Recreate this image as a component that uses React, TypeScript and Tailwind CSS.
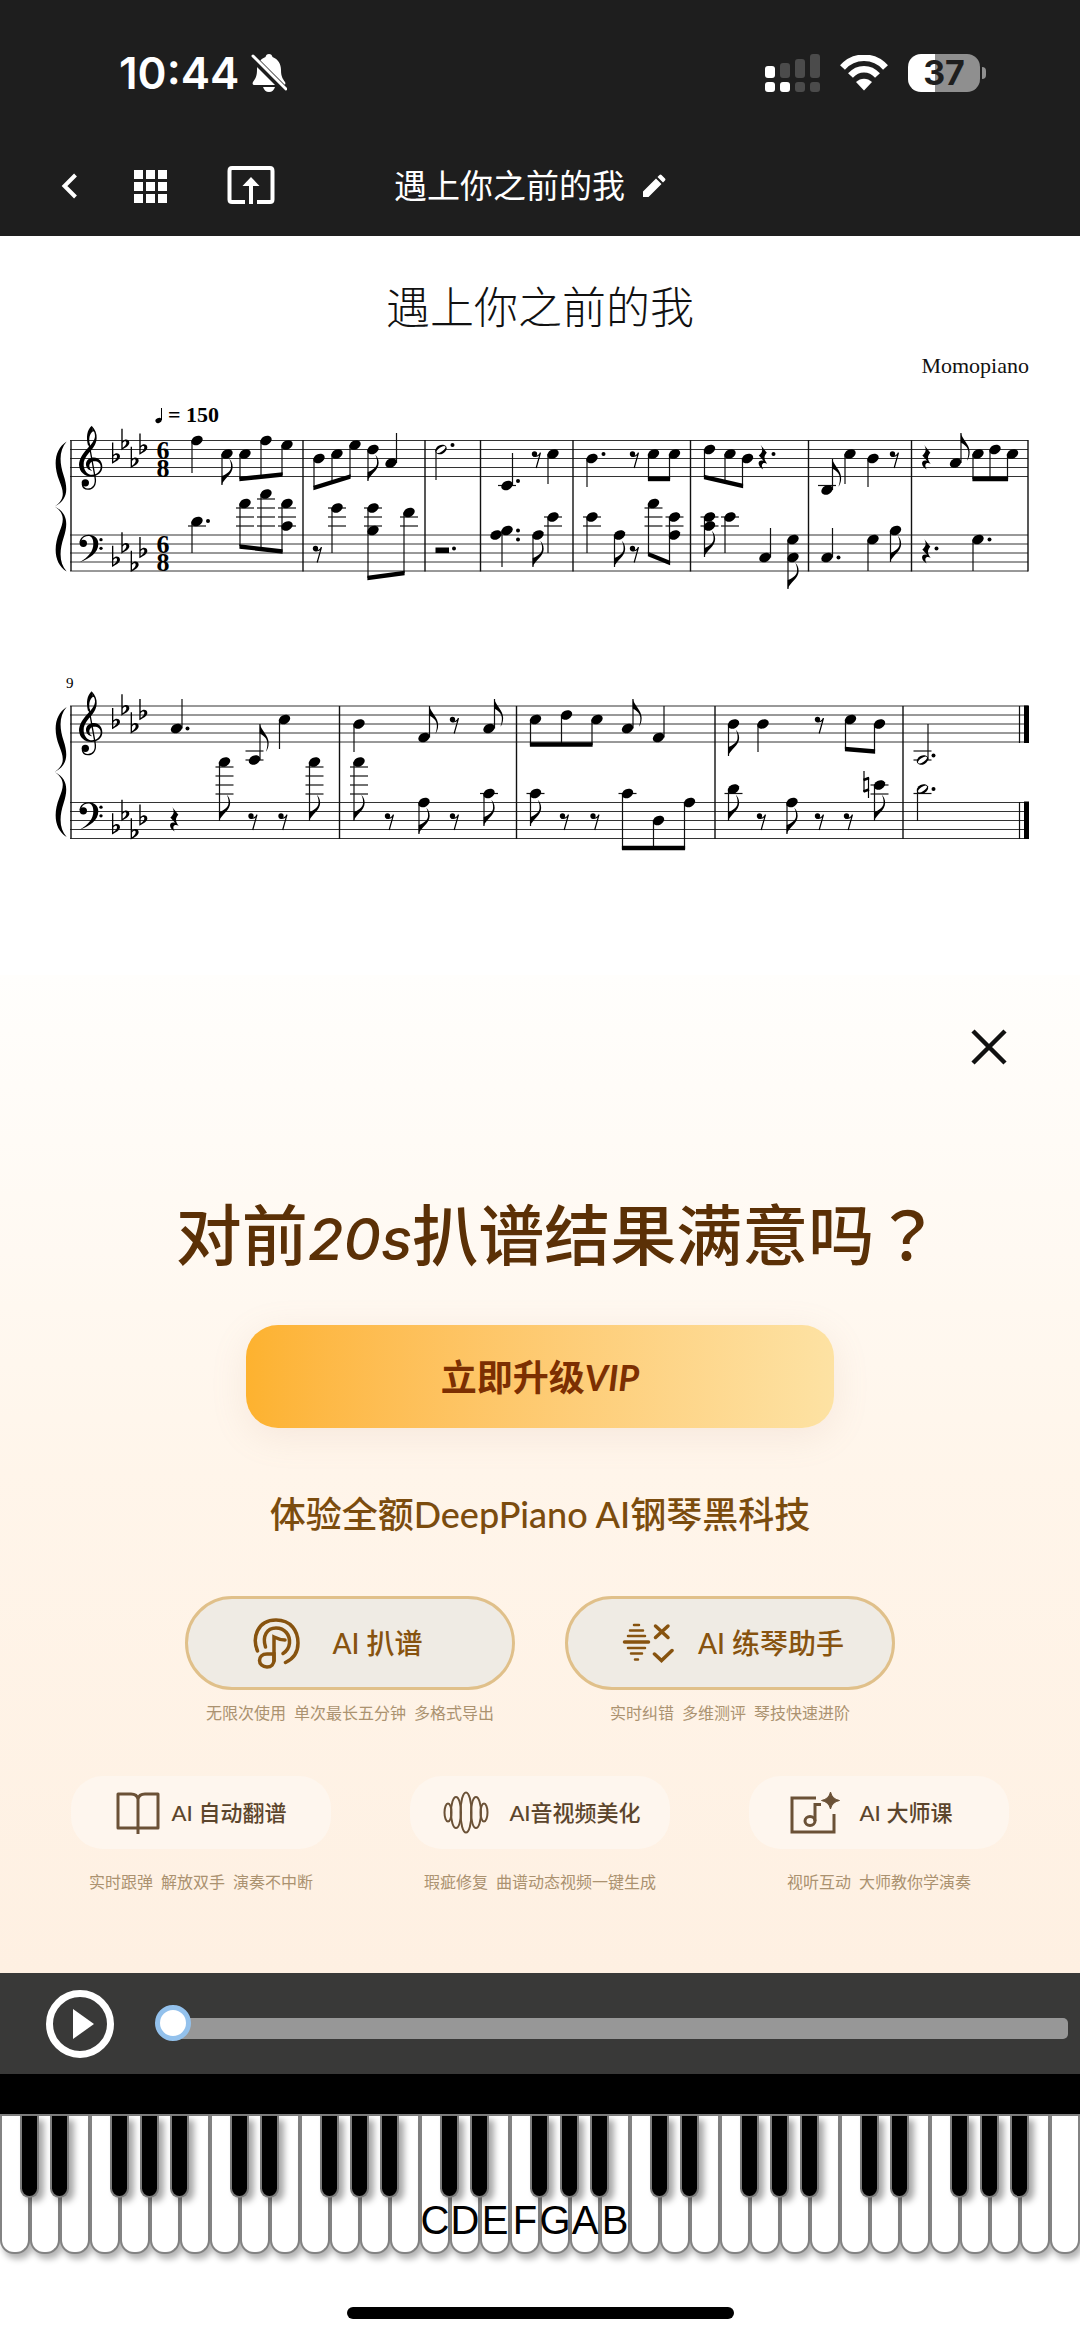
import React from "react";

type Chord = {
  x: number;
  ys: number[];
  end: number;
  flag?: boolean;
  half?: boolean;
  led?: number[];
};

const n = (x: number, ys: number[], end: number, extra: Partial<Chord> = {}): Chord => ({ x, ys, end, ...extra });

const F = { flag: true };
const L1 = { led: [508, 517, 526] };
const L2 = { led: [517, 526] };
const L4 = [767, 776, 785, 794];

const CHORDS: Chord[] = [
  // first system, upper staff
  n(197, [440.5], 473),
  n(227, [454], 485, F),
  n(245, [454], 479),
  n(266, [440.5], 477),
  n(287, [445], 475),
  n(319, [458.5], 487),
  n(337, [454], 482),
  n(355, [445], 477),
  n(373, [449.5], 481, F),
  n(391, [463], 433),
  n(441, [449.5], 480, { half: true }),
  n(507, [485.5], 453, { led: [485.5] }),
  n(553, [454], 484),
  n(592, [458.5], 487),
  n(653.5, [454], 479),
  n(674.5, [454], 479),
  n(709.5, [449.5], 477),
  n(730, [454], 482),
  n(747.5, [458.5], 486),
  n(827, [490], 459, { flag: true, led: [485.5] }),
  n(850, [454], 484),
  n(873, [458.5], 487),
  n(955.5, [463], 433, F),
  n(978, [454], 479),
  n(995, [449.5], 479),
  n(1012.5, [454], 479),
  // first system, lower staff
  n(197, [521.5], 553, { led: [526] }),
  n(245, [503.5], 546, L1),
  n(266, [494], 549, { led: [499, 508, 517, 526] }),
  n(287, [503.5, 526], 552, L1),
  n(337, [508], 553, L1),
  n(373, [508, 530.5], 578, L1),
  n(409, [512.5], 573, L2),
  n(507, [530.5], 567),
  n(538, [535], 567, F),
  n(553, [517], 553, L2),
  n(592, [517], 553, L2),
  n(619.5, [535], 567, F),
  n(653.5, [503.5], 554, L1),
  n(674.5, [517, 535], 563, L2),
  n(709.5, [517, 526], 557, { flag: true, led: [517, 526] }),
  n(730, [517], 553, L2),
  n(765, [557.5], 528),
  n(793, [539.5, 557.5], 589, F),
  n(827, [557.5], 528),
  n(873, [539.5], 571),
  n(895.5, [530.5], 562, F),
  n(978, [539.5], 571),
  // second system, upper staff
  n(176.5, [728.5], 699),
  n(254.5, [760], 724, { flag: true, led: [751, 760] }),
  n(284.5, [719.5], 749),
  n(359, [724], 752),
  n(424, [737.5], 706, F),
  n(489, [728.5], 699, F),
  n(535.5, [719.5], 745),
  n(566.5, [715], 745),
  n(597, [719.5], 745),
  n(627.5, [728.5], 699, F),
  n(658.5, [737.5], 706),
  n(733.5, [724], 756, F),
  n(763, [724], 752),
  n(850.5, [719.5], 749),
  n(879.5, [724], 751),
  n(922.5, [760], 724, { half: true, led: [751, 760] }),
  // second system, lower staff
  n(224.5, [762], 821, { flag: true, led: L4 }),
  n(314.5, [762], 821, { flag: true, led: L4 }),
  n(359, [762], 821, { flag: true, led: L4 }),
  n(424, [802.5], 834, F),
  n(489, [793.5], 826, { flag: true, led: [793.5] }),
  n(535.5, [793.5], 826, { flag: true, led: [793.5] }),
  n(627.5, [793.5], 849, { led: [793.5] }),
  n(658.5, [820.5], 849),
  n(689.5, [802.5], 849),
  n(733.5, [789], 821, { flag: true, led: [793.5] }),
  n(792, [802.5], 834, F),
  n(879.5, [785], 821, { flag: true, led: [785, 794] }),
  n(922.5, [789], 821, { half: true, led: [793.5] }),
];

const BEAMS: [number, number, number, number][] = [
  [240, 479, 282, 474.5],
  [314, 488, 350, 476.5],
  [648.5, 479, 669.5, 479],
  [704.5, 477, 742.5, 486],
  [973, 479, 1007.5, 479],
  [240, 546.5, 282, 551.5],
  [368, 578, 404, 573],
  [648.5, 554, 669.5, 563],
  [530.5, 744.5, 592, 744.5],
  [845.5, 749, 874.5, 751.5],
  [622.5, 848, 684.5, 848],
];

const EIGHTH_RESTS: [number, number][] = [
  [534.5, 454], [632.5, 454], [892.5, 454],
  [315.5, 548.5], [632.5, 548.5],
  [452.5, 719.5], [817.5, 719.5],
  [251, 816], [281, 816], [387.5, 816], [452.5, 816], [562.5, 816],
  [593, 816], [759.5, 816], [817.5, 816], [846.5, 816],
];

const QUARTER_RESTS: [number, number][] = [
  [762.5, 457.5], [926, 457.5], [926, 551.5], [174, 819.5],
];

const DOTS: [number, number][] = [
  [208, 521], [452.5, 445], [518, 481], [603.5, 454], [773.5, 454],
  [454, 548.5], [518, 530.5], [518, 539.5], [838.5, 557.5], [936.5, 548.5],
  [989.5, 539.5], [187.5, 728.5], [933.5, 755.5], [933.5, 789],
];

function Head({ x, y, half }: { x: number; y: number; half?: boolean }) {
  return (
    <g transform={`translate(${x} ${y}) rotate(-27)`}>
      <ellipse rx="6" ry="4.4" />
      {half && <ellipse rx="5.2" ry="2" fill="#fff" transform="rotate(-8)" />}
    </g>
  );
}

function ChordMark({ x, ys, end, flag, half, led = [] }: Chord) {
  const down = end > ys[0];
  const sx = down ? x - 5 : x + 5.5;
  return (
    <g>
      {led.map((y) => (
        <path key={y} d={`M${x - 9} ${y}h18`} stroke="#111" strokeWidth="1.2" />
      ))}
      <path d={`M${sx} ${ys[0]}V${end}`} stroke="#111" strokeWidth="1.2" />
      {ys.map((y) => (
        <Head key={y} x={x} y={y} half={half} />
      ))}
      {flag && (
        <path
          transform={`translate(${sx} ${end}) scale(${down ? 0.333 : 0.27} ${down ? 0.333 : -0.35})`}
          d="M-1 0C6-20 32-32 32-54C32-66 27-74 22-79C27-68 28-60 27-52C25-40 12-32-1-27Z"
        />
      )}
    </g>
  );
}

function Flats({ top, tops }: { top: number; tops: number[] }) {
  return (
    <g transform={`translate(40 ${top}) scale(0.3333)`} fillRule="evenodd">
      {tops.map((t, i) => (
        <path
          key={i}
          transform={`translate(${[218, 246, 274, 300][i]} ${t})`}
          d="M-2 0H2V37C9 29 22 31 22 42C22 51 10 57-2 64ZM2 43V57C9 52 13 47 13 42C13 36 6 36 2 43Z"
        />
      ))}
    </g>
  );
}

function SystemFrame({ treble, bass, time }: { treble: number; bass: number; time?: boolean }) {
  const lines = [0, 9, 18, 27, 36];
  return (
    <g>
      {[...lines.map((l) => treble + l), ...lines.map((l) => bass + l)].map((y) => (
        <path key={y} d={`M70 ${y}H1028`} stroke="#333" strokeWidth="1" />
      ))}
      <path d={`M71 ${treble}V${bass + 36}`} stroke="#111" strokeWidth="1.4" />
      <g transform={`translate(40 ${treble + 1}) scale(0.3333)`}>
        <path d="M80 0C45 22 38 68 58 118C70 148 78 172 44 195C78 218 70 242 58 272C38 322 45 368 80 390C58 365 57 330 71 288C84 248 84 215 44 195C84 175 84 142 71 102C57 60 58 25 80 0Z" />
      </g>
      <g transform={`translate(40 ${treble}) scale(0.3333) translate(0 -181)`}>
        <path d="M155 137C166 148 171 162 170 174C169 194 157 206 147 218C136 231 130 242 131 256C133 274 144 284 156 284C170 284 182 274 182 260C182 249 174 243 163 243C153 243 148 250 148 257C148 264 151 268 157 272C145 270 138 262 138 252C138 240 149 232 162 232C177 232 187 245 187 260C187 277 173 289 154 289C134 289 118 276 117 254C117 236 130 218 143 204C156 190 164 180 165 168C165 158 162 152 158 153Z" />
        <path d="M155 137C141 150 138 170 144 196L150 194C145 175 149 160 159 153Z" />
        <path d="M147 190L165 290C170 315 158 327 144 327C134 327 128 321 127 312" fill="none" stroke="#000" strokeWidth="4" />
        <circle cx="136" cy="308" r="11" />
      </g>
      <g transform={`translate(40 ${bass}) scale(0.3333) translate(0 -465)`}>
        <path d="M118 489C120 473 131 464 146 464C163 464 175 475 175 491C175 518 150 535 119 547C146 530 160 514 160 491C160 476 154 468 145 468C136 468 128 472 125 480Z" />
        <circle cx="130" cy="490" r="11" />
        <circle cx="183" cy="479" r="5" />
        <circle cx="183" cy="505" r="5" />
      </g>
      <Flats top={treble} tops={[6, -35, 19, -21]} />
      <Flats top={bass} tops={[32, -8, 47, 6]} />
      {time &&
        [treble, bass].map((t) => (
          <g key={t} fontFamily="Liberation Serif, serif" fontWeight="700" fontSize="26" textAnchor="middle">
            <text x="163" y={t + 18}>6</text>
            <text x="163" y={t + 36}>8</text>
          </g>
        ))}
    </g>
  );
}

function Score() {
  return (
    <svg viewBox="0 380 1080 595" className="block h-auto w-full" role="img" aria-label="乐谱">
      <SystemFrame treble={440.5} bass={535} time />
      <SystemFrame treble={706} bass={802.5} />
      {[303, 425, 480.5, 573, 690.5, 808.5, 911.5, 1028].map((x) => (
        <path key={x} d={`M${x} 440V571.5`} stroke="#111" strokeWidth="1.4" />
      ))}
      {[339.5, 516.5, 715, 903].map((x) => (
        <path key={x} d={`M${x} 706V839`} stroke="#111" strokeWidth="1.4" />
      ))}
      {[706, 802].map((y) => (
        <g key={y}>
          <path d={`M1019.5 ${y}v37`} stroke="#111" strokeWidth="1.2" />
          <rect x="1024" y={y - 0.5} width="5" height="37.5" />
        </g>
      ))}
      {CHORDS.map((c, i) => (
        <ChordMark key={i} {...c} />
      ))}
      <Head x={496} y={535} />
      {BEAMS.map(([a, b, c, d], i) => (
        <path key={i} d={`M${a - 0.6} ${b - 2.2}L${c + 0.6} ${d - 2.2}V${d + 2.2}L${a - 0.6} ${b + 2.2}Z`} />
      ))}
      {DOTS.map(([x, y], i) => (
        <circle key={i} cx={x} cy={y} r="2" />
      ))}
      {EIGHTH_RESTS.map(([x, y], i) => (
        <g key={i} transform={`translate(${x} ${y}) scale(0.3333)`}>
          <circle r="8" />
          <path d="M-4 6C4 9 14 6 18-4L5 42" fill="none" stroke="#000" strokeWidth="3.6" />
        </g>
      ))}
      {QUARTER_RESTS.map(([x, y], i) => (
        <path
          key={i}
          transform={`translate(${x} ${y}) scale(0.3333)`}
          d="M-6-38L13-14C3-3 4 6 14 19C1 13-7 20 2 36C-17 25-16 5 3 10L-11-6C2-16 1-27-6-38Z"
        />
      ))}
      <rect x="435.5" y="547.5" width="13.5" height="5.5" />
      <g fill="none" stroke="#000">
        <path d="M864 771V792M868.5 777V798" strokeWidth="1.2" />
        <path d="M863.5 780L869 778M863.5 791.5L869 789.5" strokeWidth="2.8" />
      </g>
      <ellipse cx="158.5" cy="420.5" rx="3.2" ry="2.4" transform="rotate(-25 158.5 420.5)" />
      <path d="M161.5 420V408" stroke="#000" strokeWidth="1" />
      <text x="168" y="422" fontFamily="Liberation Serif, serif" fontWeight="700" fontSize="22">= 150</text>
      <text x="66" y="688" fontFamily="Liberation Serif, serif" fontSize="15">9</text>
    </svg>
  );
}

function StatusBar() {
  return (
    <div className="flex items-center justify-between pt-[49px] pr-[94px] pl-[119px] text-white">
      <div className="flex h-12 items-center gap-3">
        <span className="font-['Inter',sans-serif] text-[44px] leading-12 font-semibold">10:44</span>
        <svg width="36" height="40" viewBox="0 0 36 40" fill="#fff" aria-label="静音">
          <path d="M18 1C20 1 21 2 21.500 4C27 6 30 11 30 17C30 24 32 26 34 29C35 31 34 32 32 32H4C2 32 1 31 2 29C4 26 6 24 6 17C6 11 9 6 14.500 4C15 2 16 1 18 1Z" />
          <path d="M12 34H24C23 37 21 39 18 39C15 39 13 37 12 34Z" />
          <path d="M0 3L34 37" stroke="#1e1e1e" strokeWidth="7" />
          <path d="M2 3L35 36" stroke="#fff" strokeWidth="3" strokeLinecap="round" />
        </svg>
      </div>
      <div className="flex items-center gap-5">
        <svg width="55" height="40" viewBox="0 0 55 40" aria-label="信号">
          <g fill="#fff">
            <rect x="0" y="13" width="10" height="12" rx="3" />
            <rect x="0" y="29" width="10" height="10" rx="3" />
            <rect x="15" y="29" width="10" height="10" rx="3" />
          </g>
          <g fill="#4b4b4b">
            <rect x="15" y="10" width="10" height="15" rx="3" />
            <rect x="30" y="6" width="10" height="19" rx="3" />
            <rect x="45" y="1" width="10" height="24" rx="3" />
            <rect x="30" y="29" width="10" height="10" rx="3" />
            <rect x="45" y="29" width="10" height="10" rx="3" />
          </g>
        </svg>
        <svg width="48" height="36" viewBox="0 0 48 36" aria-label="无线网络">
          <g fill="none" stroke="#fff" strokeWidth="6.500">
            <path d="M2.500 12.500C14-.5 34-.5 45.500 12.500" />
            <path d="M10.500 20.500C18 12 30 12 37.500 20.500" />
          </g>
          <path d="M24 35.500L16 27C20.500 22.500 27.500 22.500 32 27Z" fill="#fff" />
        </svg>
        <div className="flex items-center gap-0.5">
          <div className="flex h-[38px] w-[72px] items-center justify-center rounded-[13px] bg-[linear-gradient(90deg,#fff_37%,#8f8f8f_37%)] font-['Inter',sans-serif] text-[34px] leading-none font-bold text-[#1e1e1e]">
            37
          </div>
          <div className="h-3 w-1 rounded-r-full bg-[#8f8f8f]" />
        </div>
      </div>
    </div>
  );
}

function NavBar() {
  return (
    <nav className="mt-[65px] flex h-12 items-center pl-[60px] text-white">
      <button aria-label="返回" className="flex">
        <svg width="18" height="26" viewBox="0 0 18 26" fill="none" stroke="#fff" strokeWidth="4">
          <path d="M15.500 2L4.500 13L15.500 24" />
        </svg>
      </button>
      <button aria-label="菜单" className="ml-14 grid grid-cols-3 gap-[3px]">
        {Array.from({ length: 9 }, (_, i) => (
          <span key={i} className="size-[9px] bg-white" />
        ))}
      </button>
      <button aria-label="导出" className="ml-[60px] flex">
        <svg width="48" height="40" viewBox="0 0 48 40" fill="none" stroke="#fff" strokeWidth="4">
          <path d="M18 36H5Q2.500 36 2.500 33.500V5Q2.500 2 5 2H43Q45.500 2 45.500 5V33.500Q45.500 36 43 36H30" />
          <path d="M24 38V18" />
          <path d="M15.500 20L24 11L32.500 20Z" fill="#fff" stroke="none" />
        </svg>
      </button>
      <h1 className="ml-[119px] pb-1 font-['Noto_Sans_CJK_SC',sans-serif] text-[33px] leading-12 font-normal">遇上你之前的我</h1>
      <button aria-label="编辑标题" className="ml-[17px] flex">
        <svg width="24" height="24" viewBox="0 0 24 24" fill="#fff">
          <path d="M1 23V17.500L14 4.500L19.500 10L6.500 23ZM15.500 3L17.500 1Q18.500 0 19.500 1L23 4.500Q24 5.500 23 6.500L21 8.500Z" />
        </svg>
      </button>
    </nav>
  );
}

function Caption({ parts }: { parts: string[] }) {
  return (
    <p className="flex justify-center gap-2 text-base leading-6 whitespace-nowrap text-[#ab9270]">
      {parts.map((p) => (
        <span key={p}>{p}</span>
      ))}
    </p>
  );
}

const TranscribeIcon = (
  <svg width="47" height="51" viewBox="0 0 47 51" fill="none" stroke="#87530f" strokeWidth="3.500" strokeLinecap="round">
    <path d="M4.500 33C-1 20 4 2 23 2C38 2 45 13 45 25C45 34 40 41 32.500 44.500" />
    <path d="M12.500 29C9 18 14 10 23 10C32 10 37 17 36.500 25C36 30 34 33 30 35.500" />
    <path d="M21 43V19C25 21 28 22 32 22" />
    <path d="M21 36H14C9 36 6.500 39 6.500 42.500C6.500 46 9.500 49 14 49C18.500 49 21 46 21 42Z" />
  </svg>
);

const PracticeIcon = (
  <svg width="52" height="40" viewBox="0 0 52 40" fill="none" stroke="#87530f" strokeLinecap="round">
    <path d="M12 2H17M8 7.500H21M6 13H23M6 25H23M9 30.500H20M13 36.500H16" strokeWidth="2.500" />
    <path d="M2.500 19H26.500" strokeWidth="3.500" />
    <path d="M33.500 3L46 14.500M46 3L33.500 14.500" strokeWidth="3.500" />
    <path d="M32.500 31L39.500 37.500L50 27.500" strokeWidth="3.500" />
  </svg>
);

const BookIcon = (
  <svg width="44" height="42" viewBox="0 0 44 42" fill="none" stroke="#6b5136" strokeWidth="3">
    <path d="M2 2H15Q21 2 22 7Q23 2 29 2H42V36H2ZM22 6V42" strokeLinejoin="round" />
  </svg>
);

const WaveIcon = (
  <svg width="46" height="43" viewBox="0 0 46 43" fill="none" stroke="#6b5136" strokeWidth="2">
    <ellipse cx="23" cy="21.500" rx="5.500" ry="20" />
    <ellipse cx="13" cy="21.500" rx="5" ry="15.500" />
    <ellipse cx="33" cy="21.500" rx="5" ry="15.500" />
    <ellipse cx="5" cy="21.500" rx="3.500" ry="9" />
    <ellipse cx="41" cy="21.500" rx="3.500" ry="9" />
  </svg>
);

const MasterIcon = (
  <svg width="50" height="42" viewBox="0 0 50 42" fill="none" stroke="#6b5136" strokeWidth="3">
    <path d="M26 6H2V40H44V22" />
    <ellipse cx="20" cy="29" rx="5" ry="4.500" />
    <path d="M25 29V12.500H31" />
    <path d="M40.500 0Q42 7 49.500 8.500Q42 10 40.500 17Q39 10 31.500 8.500Q39 7 40.500 0Z" fill="#6b5136" stroke="#6b5136" strokeWidth="1" />
  </svg>
);

const CARDS = [
  { icon: TranscribeIcon, label: "AI 扒谱", parts: ["无限次使用", "单次最长五分钟", "多格式导出"], box: "gap-8 pr-6" },
  { icon: PracticeIcon, label: "AI 练琴助手", parts: ["实时纠错", "多维测评", "琴技快速进阶"], box: "gap-6 pl-1.5" },
];

const PILLS = [
  { icon: BookIcon, label: "AI 自动翻谱", parts: ["实时跟弹", "解放双手", "演奏不中断"], box: "gap-3" },
  { icon: WaveIcon, label: "AI音视频美化", parts: ["瑕疵修复", "曲谱动态视频一键生成"], box: "gap-5 pl-1" },
  { icon: MasterIcon, label: "AI 大师课", parts: ["视听互动", "大师教你学演奏"], box: "gap-5 pr-4" },
];

function Upsell() {
  return (
    <section className="bg-linear-to-b from-[#fffefc] via-[#fff5ea] to-[#fef0e2] pt-[50px] pb-[79px] font-['Lato','Noto_Sans_CJK_SC',sans-serif]">
      <div className="flex justify-end pr-[69px]">
        <button aria-label="关闭" className="flex size-11 items-center justify-center">
          <svg width="36" height="36" viewBox="0 0 36 36" stroke="#111" strokeWidth="4.500">
            <path d="M2 2L34 34M34 2L2 34" />
          </svg>
        </button>
      </div>
      <h2 className="mt-[126px] pl-9 text-center text-[66px] leading-20 font-medium whitespace-nowrap text-[#5b3006]">
        对前<span className="font-['Inter',sans-serif] text-[58px] leading-none italic">20s</span>扒谱结果满意吗
        <span className="font-['Noto_Sans_CJK_TC',sans-serif] leading-none" lang="zh-Hant">？</span>
      </h2>
      <button className="mx-auto mt-[50px] flex h-[103px] w-[588px] max-w-full items-center justify-center rounded-4xl bg-linear-to-r from-[#fdb22f] to-[#fde2a3] text-4xl font-bold text-[#7c2f02] shadow-[0_8px_36px_rgba(190,150,130,0.14)]">
        立即升级<i>VIP</i>
      </button>
      <p className="mt-[62px] text-center text-4xl leading-12 font-medium text-[#7b4c0e]">体验全额DeepPiano AI钢琴黑科技</p>
      <div className="mt-[58px] flex justify-center gap-[50px]">
        {CARDS.map((c) => (
          <div key={c.label} className="w-[330px]">
            <button
              className={`mb-[11px] flex h-[94px] w-full items-center justify-center rounded-full border-3 border-[#e0c08a] bg-[#efebe4] text-[28px] font-medium text-[#87530f] ${c.box}`}
            >
              {c.icon}
              {c.label}
            </button>
            <Caption parts={c.parts} />
          </div>
        ))}
      </div>
      <div className="mt-[51px] flex justify-between px-[71px]">
        {PILLS.map((p) => (
          <div key={p.label} className="w-[260px]">
            <button
              className={`mb-[21px] flex h-[73px] w-full items-center justify-center rounded-4xl bg-[#fef6ee] text-[22px] font-medium text-[#5c452c] ${p.box}`}
            >
              {p.icon}
              {p.label}
            </button>
            <Caption parts={p.parts} />
          </div>
        ))}
      </div>
    </section>
  );
}

function Player() {
  return (
    <div className="flex h-[101px] items-center bg-[#393938] pr-3 pl-[46px]">
      <button aria-label="播放" className="flex">
        <svg width="68" height="68" viewBox="0 0 68 68">
          <circle cx="34" cy="34" r="30.500" fill="none" stroke="#fff" strokeWidth="7" />
          <path d="M27 19L48 34L27 49Z" fill="#fff" />
        </svg>
      </button>
      <input
        type="range"
        aria-label="播放进度"
        min={0}
        max={100}
        defaultValue={0}
        className="mt-[9px] ml-[41px] h-[21px] flex-1 appearance-none rounded-[5px] bg-[linear-gradient(90deg,transparent_16px,#979797_16px)] [&::-webkit-slider-thumb]:-mt-[11px] [&::-webkit-slider-thumb]:size-9 [&::-webkit-slider-thumb]:appearance-none [&::-webkit-slider-thumb]:rounded-full [&::-webkit-slider-thumb]:border-5 [&::-webkit-slider-thumb]:border-[#93c1ec] [&::-webkit-slider-thumb]:bg-white"
      />
    </div>
  );
}

const SHARP_AFTER = [true, true, false, true, true, true, false];
const NAMES = ["C", "D", "E", "F", "G", "A", "B"];

function Piano() {
  return (
    <div className="bg-white">
      <div className="h-10 bg-black" />
      <div className="flex h-[140px] border-t-2 border-[#808080]">
        {Array.from({ length: 36 }, (_, i) => (
          <div key={i} className="relative flex-1">
            <button
              aria-label={`白键 ${i + 1}`}
              className="block h-full w-full rounded-b-[14px] border-2 border-t-0 border-[#838383] bg-white shadow-[3px_5px_6px_rgba(0,0,0,0.3)]"
            />
            {i < 35 && SHARP_AFTER[i % 7] && (
              <button
                aria-label={`黑键 ${i + 1}`}
                className="absolute top-0 -right-[9px] z-10 h-[82px] w-[19px] rounded-b-[10px] border-2 border-t-0 border-[#7d7d7d] bg-black shadow-[5px_4px_6px_rgba(0,0,0,0.35)]"
              />
            )}
            {i >= 14 && i < 21 && (
              <span className="pointer-events-none absolute inset-x-0 top-[82px] z-20 flex justify-center font-['Liberation_Sans',sans-serif] text-[40px] leading-11 text-black">
                {NAMES[i - 14]}
              </span>
            )}
          </div>
        ))}
      </div>
      <div className="flex h-[86px] justify-center pt-[53px]">
        <div className="h-3 w-[387px] rounded-full bg-black" />
      </div>
    </div>
  );
}

export default function App() {
  return (
    <main className="w-full bg-white">
      <header className="bg-[#1e1e1e] pb-[26px]">
        <StatusBar />
        <NavBar />
      </header>
      <section className="bg-white pt-9 text-[#111]">
        <h2 className="text-center font-['Noto_Sans_CJK_SC',sans-serif] text-[44px] leading-[66px] font-light">遇上你之前的我</h2>
        <p className="mt-[14px] pr-[51px] text-right font-['Liberation_Serif',serif] text-[22px] leading-7">Momopiano</p>
        <Score />
      </section>
      <Upsell />
      <Player />
      <Piano />
    </main>
  );
}
